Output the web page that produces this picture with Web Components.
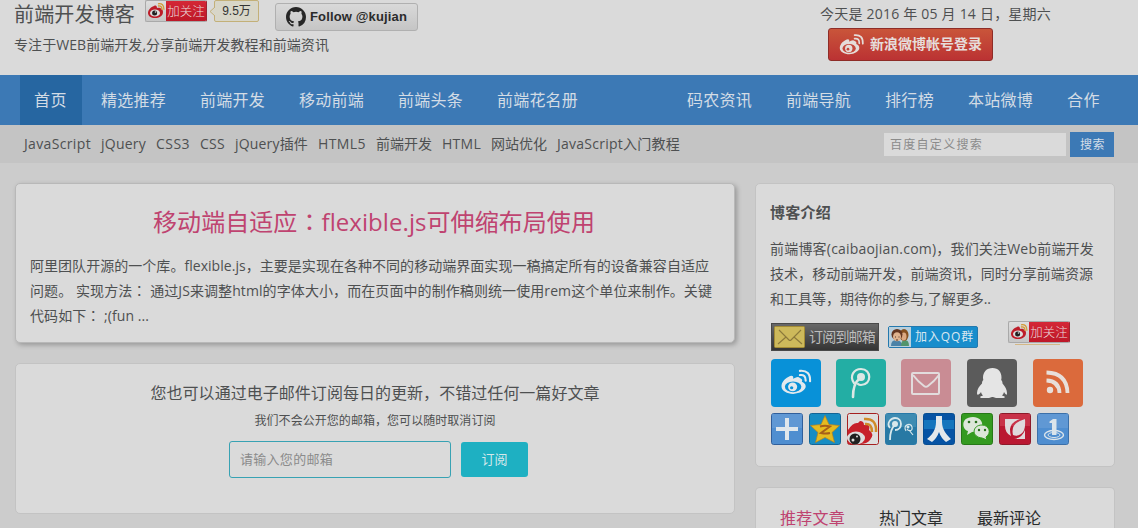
<!DOCTYPE html>
<html lang="zh-CN">
<head>
<meta charset="utf-8">
<title>前端开发博客</title>
<style>
html{overflow:hidden}
body{margin:0;width:1138px;height:528px;overflow:hidden;background:#ccc;color:#4e5051;font:14px/25px "Open Sans","Noto Sans CJK SC",sans-serif}
</style>
</head>
<body>
<blog-page></blog-page>
<script>
function component(name, html, ready) {
  const template = document.createElement('template');
  template.innerHTML = html;
  customElements.define(name, class extends HTMLElement {
    connectedCallback() {
      if (this.shadowRoot) return;
      this.attachShadow({ mode: 'open' }).append(template.content.cloneNode(true));
      if (ready) ready(this, this.shadowRoot);
    }
  });
}

component('blog-page', `
<style>
:host{display:block}
main{display:grid;grid-template-columns:720px 360px;column-gap:20px;padding:20px 0 0 15px;align-items:start}
.col{display:grid;row-gap:20px}
</style>
<site-header></site-header>
<site-nav></site-nav>
<topic-bar></topic-bar>
<main>
  <div class="col">
    <blog-card style="--h:160px;--shadow:2px 2px 5px rgba(0,0,0,.26);--line:#b8b8b8"><feature-post></feature-post></blog-card>
    <blog-card style="--h:151px"><mail-form></mail-form></blog-card>
  </div>
  <div class="col">
    <blog-card style="--h:284px"><blog-about></blog-about></blog-card>
    <blog-card style="--h:41px;--edge:0;--radius:5px 5px 0 0"><post-tabs></post-tabs></blog-card>
  </div>
</main>`);

component('blog-card', `
<style>:host{display:block;box-sizing:border-box;height:var(--h);background:#dadada;border:1px solid var(--line,#c3c3c3);border-bottom-width:var(--edge,1px);border-radius:var(--radius,5px);box-shadow:var(--shadow,none)}</style>
<slot></slot>`);

component('site-header', `
<style>
:host{display:flex;box-sizing:border-box;height:75px;background:#dadada;padding-left:14px}
.brand{width:806px}
.row{display:flex;height:32px;align-items:flex-start}
h1{margin:0;font-weight:400;font-size:20px;line-height:29px;width:131px}
p{margin:0;line-height:25px}
.github{margin:3px 0 0 16px}
.date{line-height:27px}
</style>
<div class="brand">
  <div class="row"><h1><fit-line width="121">前端开发博客</fit-line></h1><weibo-follow></weibo-follow><count-bubble>9.5万</count-bubble><github-follow class="github"></github-follow></div>
  <p><fit-line width="315">专注于WEB前端开发,分享前端开发教程和前端资讯</fit-line></p>
</div>
<div><div class="date"><fit-line width="231">今天是 2016 年 05 月 14 日，星期六</fit-line></div><weibo-login></weibo-login></div>`);

component('weibo-follow', `
<style>
:host{display:flex;box-sizing:border-box;width:62px;height:22px;border:1px solid #a9a9a9;border-right-color:#9d2430;border-radius:2px;overflow:hidden;background:linear-gradient(#dedede,#c6c6c6)}
svg{width:20px;height:20px;flex:none}
span{flex:1;background:linear-gradient(#d42736,#bd1828);color:#eadede;font:300 12.5px/19px "Noto Sans CJK SC",sans-serif;text-align:center;white-space:nowrap}
</style>
<svg viewBox="0 0 20 20"><path d="M8 5c2-1 3 0 3 2 4-1 6 2 6 4 0 4-4 6-8 6s-7-2-7-5 3-6 6-7z" fill="#bd1d29"/><ellipse cx="9" cy="12" rx="5" ry="3.6" fill="#ddd"/><circle cx="8.6" cy="12" r="2.5" fill="#202020"/><circle cx="9.5" cy="11" r=".8" fill="#ddd"/><path d="M12 5q4-1 4 4M12 2.8q6-1 6 6" fill="none" stroke="#d39a37" stroke-width="1.3"/></svg><span>加关注</span>`);

component('count-bubble', `
<style>
:host{display:flex;margin-left:2px;height:22px;width:50px;flex:none}
svg{width:6px;height:22px;flex:none;margin-right:-1px;z-index:1}
div{box-sizing:border-box;width:45px;border:1px solid #c3b078;border-radius:2px;background:#d8d6c8;color:#333;font:12px/20px "Liberation Sans","Noto Sans CJK SC",sans-serif;text-align:center}
</style>
<svg viewBox="0 0 6 22"><path d="M6 7L1 11.5 6 16" fill="#d8d6c8" stroke="#c3b078"/></svg><div><slot></slot></div>`);

component('github-follow', `
<style>
:host{display:flex;box-sizing:border-box;width:143px;height:28px;border:1px solid #b0b0b0;border-radius:3px;background:linear-gradient(#d9d9d9,#c5c5c5);padding-left:10px;align-items:center;color:#2b2b2b;font:bold 13px/26px "Liberation Sans",sans-serif}
svg{width:20px;height:20px;margin-right:4px}
</style>
<svg viewBox="0 0 16 16"><path fill="#262626" d="M8 0C3.58 0 0 3.58 0 8c0 3.54 2.29 6.53 5.47 7.59.4.07.55-.17.55-.38 0-.19-.01-.82-.01-1.49-2.01.37-2.53-.49-2.69-.94-.09-.23-.48-.94-.82-1.13-.28-.15-.68-.52-.01-.53.63-.01 1.08.58 1.23.82.72 1.21 1.87.87 2.33.66.07-.52.28-.87.51-1.07-1.78-.2-3.64-.89-3.64-3.95 0-.87.31-1.59.82-2.15-.08-.2-.36-1.02.08-2.12 0 0 .67-.21 2.2.82a7.4 7.4 0 0 1 4 0c1.53-1.04 2.2-.82 2.2-.82.44 1.1.16 1.92.08 2.12.51.56.82 1.27.82 2.15 0 3.07-1.87 3.75-3.65 3.95.29.25.54.73.54 1.48 0 1.07-.01 1.93-.01 2.2 0 .21.15.46.55.38A8 8 0 0 0 16 8c0-4.42-3.58-8-8-8z"/></svg><fit-line width="97">Follow @kujian</fit-line>`);

const weiboPath = `<path d="M20 10c-2-2-5 0-7 1 1-4-2-4-5-2C4 11 1 15 1 19c0 5 6 8 12 8 7 0 13-4 13-8 0-3-2-4-4-5 1-2 0-3-2-4z" fill="var(--ink,#e5dcd8)"/><ellipse cx="13" cy="19.500" rx="8.500" ry="5.700" fill="var(--hole,#c4463a)"/><circle cx="12.500" cy="19.500" r="4.700" fill="var(--ink,#e5dcd8)"/><circle cx="11.500" cy="20.500" r="1.700" fill="var(--hole,#c4463a)"/><path d="M20 7q6-1 6 6M20 2.500q11-1 10.500 11" fill="none" stroke="var(--ink,#e5dcd8)" stroke-width="2.200" stroke-linecap="round"/>`;

component('weibo-login', `
<style>
:host{display:flex;box-sizing:border-box;width:165px;height:33px;margin:1px 0 0 8px;border:1px solid #8e2c27;border-radius:3px;background:linear-gradient(#c9553a,#bb3233);align-items:center;padding-left:10px;color:#e6dddb;font-weight:700;line-height:30px}
svg{width:25px;height:23px;margin-right:6px}
fit-line{margin-top:-2px}
</style>
<svg viewBox="0 0 32 29">${weiboPath}</svg><fit-line width="112">新浪微博帐号登录</fit-line>`);

component('site-nav', `
<style>
:host{display:flex;justify-content:space-between;box-sizing:border-box;height:50px;background:#3c79b5;padding:0 23px 0 20px}
nav{display:flex;gap:5px}
a{box-sizing:border-box;padding:0 15px 0 14px;font-size:16px;line-height:50px;color:#d3dce5;white-space:nowrap}
a.on{background:#2666a1}
</style>
<nav><a class="on"><fit-line width="33">首页</fit-line></a><a><fit-line width="65">精选推荐</fit-line></a><a><fit-line width="65">前端开发</fit-line></a><a><fit-line width="65">移动前端</fit-line></a><a><fit-line width="65">前端头条</fit-line></a><a><fit-line width="81">前端花名册</fit-line></a></nav>
<nav><a><fit-line width="65">码农资讯</fit-line></a><a><fit-line width="65">前端导航</fit-line></a><a><fit-line width="49">排行榜</fit-line></a><a><fit-line width="65">本站微博</fit-line></a><a><fit-line width="33">合作</fit-line></a></nav>`);

component('topic-bar', `
<style>
:host{display:flex;box-sizing:border-box;height:38px;background:#c4c4c4;padding:0 24px 0 24px;justify-content:space-between;align-items:center}
nav{display:flex;gap:10px;line-height:37px;margin-top:-2px}
form{display:flex;align-items:center;margin-bottom:-1px}
.field{box-sizing:border-box;width:182px;height:23px;background:#dadada;color:#8b8b8b;padding-left:6px;font-size:12px;line-height:23px;margin:0 4px 0 0}
.go{box-sizing:border-box;width:44px;height:25px;padding-left:1px;background:#3c79b5;color:#d5dee8;font-size:12px;line-height:25px;text-align:center;letter-spacing:.5px}
</style>
<nav><fit-line width="67">JavaScript</fit-line><fit-line width="45">jQuery</fit-line><fit-line width="34">CSS3</fit-line><fit-line width="25">CSS</fit-line><fit-line width="73">jQuery插件</fit-line><fit-line width="48">HTML5</fit-line><fit-line width="56">前端开发</fit-line><fit-line width="39">HTML</fit-line><fit-line width="56">网站优化</fit-line><fit-line width="123">JavaScript入门教程</fit-line></nav>
<form><div class="field"><fit-line width="93">百度自定义搜索</fit-line></div><div class="go">搜索</div></form>`);

component('feature-post', `
<style>
:host{display:block;padding:19px 14px 0}
h2{margin:0 0 13px 123px;font-size:24px;font-weight:400;line-height:36px;color:#bf4370}
p{margin:0;display:flex;flex-direction:column}
[lang=ja]{font-family:"Noto Sans CJK JP",sans-serif}
</style>
<h2><fit-line width="442">移动端自适应<span lang="ja">：</span>flexible.js可伸缩布局使用</fit-line></h2>
<p><fit-line width="679">阿里团队开源的一个库。flexible.js，主要是实现在各种不同的移动端界面实现一稿搞定所有的设备兼容自适应</fit-line><fit-line width="682">问题。 实现方法<span lang="ja">：</span> 通过JS来调整html的字体大小，而在页面中的制作稿则统一使用rem这个单位来制作。关键</fit-line><fit-line width="119">代码如下<span lang="ja">：</span> ;(fun ...</fit-line></p>`);

component('mail-form', `
<style>
:host{display:flex;flex-direction:column;align-items:center;padding-top:16px}
h3{margin:0;font-size:16px;font-weight:400;line-height:27px}
p{margin:1px 0 0;font-size:12px;line-height:26px}
form{display:flex;gap:10px;margin:7px 0 0 7px;align-items:center}
.field{box-sizing:border-box;width:222px;height:37px;border:1px solid #38a2b3;border-radius:3px;padding-left:10px;color:#8b8b8b;font-size:13px;line-height:35px}
.go{width:67px;height:35px;border-radius:3px;background:#1eb0c2;color:#d6e8eb;font-size:13px;line-height:34px;text-align:center}
</style>
<h3><fit-line width="449">您也可以通过电子邮件订阅每日的更新，不错过任何一篇好文章</fit-line></h3>
<p><fit-line width="241">我们不会公开您的邮箱，您可以随时取消订阅</fit-line></p>
<form><div class="field"><fit-line width="93">请输入您的邮箱</fit-line></div><div class="go">订阅</div></form>`);

component('blog-about', `
<style>
:host{display:block;padding:16px 0 0 14px}
h3{margin:0 0 11px;font-size:15px;font-weight:700;line-height:25px}
p{margin:0;display:flex;flex-direction:column}
.badges{display:flex;align-items:flex-start;height:48px;box-sizing:border-box;padding:10px 0 0 1px}
.mail{display:flex;box-sizing:border-box;width:108px;height:28px;margin-top:2px;background:linear-gradient(#686868,#343434);border:1px solid #494949;align-items:center;padding-left:2px;color:#bdbdbd;line-height:26px}
.mail svg{width:31px;height:22px;margin-right:4px}
.qq{display:flex;box-sizing:border-box;width:90px;height:22px;margin:5px 30px 0 9px;border:1px solid #2479ae;border-radius:2px;background:#188dcc;color:#d8e7f0;font-size:12px;line-height:20px}
.qq svg{width:22px;height:20px;margin-right:4px;flex:none}
.follow i{display:block;width:45px;height:1px;margin:1px 0 0 7px;background:#d4b886}
.big{display:grid;grid-template-columns:65px 65px 66px 66px 50px;padding-left:1px}
.small{display:grid;grid-template-columns:repeat(8,38px);padding:6px 0 0 1px}
.big>svg{width:50px;height:48px;border-radius:4px}
.small>svg{width:32px;height:32px;border-radius:2px}
</style>
<h3><fit-line width="61">博客介绍</fit-line></h3>
<p><fit-line width="324">前端博客(caibaojian.com)，我们关注Web前端开发</fit-line><fit-line width="323">技术，移动前端开发，前端资讯，同时分享前端资源</fit-line><fit-line width="221">和工具等，期待你的参与,了解更多..</fit-line></p>
<div class="badges">
  <div class="mail"><svg viewBox="0 0 31 22"><rect x=".5" y=".5" width="30" height="21" rx="1" fill="#cdb95b" stroke="#a48c35"/><path d="M5 4l10 10q1 1 2 0L27 4M4 18l8-7M28 18l-8-7" fill="none" stroke="#8b783b" stroke-width="1.1"/></svg><fit-line width="66">订阅到邮箱</fit-line></div>
  <div class="qq"><svg viewBox="0 0 22 20"><rect width="22" height="20" fill="#b9cfdc"/><path d="M2 19q0-6 5-6t7 6z" fill="#4b82a7"/><path d="M12 19q0-6 4-6t4 6z" fill="#51946c"/><ellipse cx="15" cy="8" rx="4.500" ry="6" fill="#86501f"/><ellipse cx="14.800" cy="9.500" rx="2.700" ry="4" fill="#dba982"/><circle cx="8" cy="7.500" r="5.500" fill="#633620"/><ellipse cx="8" cy="9.800" rx="4" ry="4.500" fill="#dfb38e"/><path d="M6 10h1M9.500 10h1M7 13h2" stroke="#523429"/></svg><fit-line width="59">加入QQ群</fit-line></div>
  <div class="follow"><weibo-follow></weibo-follow><i></i></div>
</div>
<div class="big">
  <svg viewBox="0 0 50 48" style="--ink:#e2e9ed;--hole:#0891d8"><rect width="50" height="48" fill="#0891d8"/><g transform="translate(9.500 9.500) scale(.97 .94)">${weiboPath}</g></svg>
  <svg viewBox="0 0 50 48"><rect width="50" height="48" fill="#23aea4"/><g fill="none" stroke="#dce8e5" stroke-linecap="round"><path d="M18 24C13 17 18 10 25 10c11 0 11 16 0 16q-2 0-3-1" stroke-width="2.200"/><path d="M23 20q-6 5-6 18" stroke-width="2.600"/></g><circle cx="25" cy="18" r="4" fill="#dce8e5"/></svg>
  <svg viewBox="0 0 50 48"><rect width="50" height="48" fill="#c98c94"/><rect x="11" y="14" width="27" height="21" rx="1" fill="none" stroke="#e2dcdd" stroke-width="2"/><path d="M12 16c3 4 7 8 11 11q2 1.500 4 0c4-3 8-7 11-11" fill="none" stroke="#e2dcdd" stroke-width="2"/></svg>
  <svg viewBox="0 0 50 48"><rect width="50" height="48" fill="#5b5b5b"/><path d="M25.500 9c-6 0-9.500 4-9.500 10l.3 2c-1 1-1.300 2-1.300 3.500-3 3-5 6-5 9.500 0 3 2 2 4-1 .3 1.500 1 2.500 2 3.500-4 1-3.500 2.500-.5 2.500H22l3-1h1l3 1h6.500c3 0 3.500-1.500-.5-2.500 1-1 1.700-2 2-3.500 2 3 3 4 3 1 0-3.500-2-6.500-4.500-9.500 0-1.500-.3-2.500-1.300-3.500l.3-2c0-6-3-10-9-10z" fill="#e5e5e5"/></svg>
  <svg viewBox="0 0 50 48"><rect width="50" height="48" fill="#db6a3c"/><circle cx="17" cy="31" r="3.200" fill="#e8dfda"/><path d="M13.500 21.500Q26 22 26.500 34M13.500 13.500Q34 14 34.500 34" stroke="#e8dfda" stroke-width="3.800" fill="none"/></svg>
</div>
<div class="small">
  <svg viewBox="0 0 32 32"><rect x=".5" y=".5" width="31" height="31" rx="2" fill="#4f8ed0" stroke="#315f9b"/><path d="M1 1h30v14H1z" fill="#6c9fd7" opacity=".6"/><path d="M14 5h4v9h9v4h-9v9h-4v-9H5v-4h9z" fill="#e0e7ec"/></svg>
  <svg viewBox="0 0 32 32"><rect x=".5" y=".5" width="31" height="31" rx="2" fill="#178dc3" stroke="#136596"/><path d="M16 2.500l4 9 10.500 1-7.500 7 2.500 10L16 24.500 6.500 29.500 9 19.500l-7.500-7 10.500-1z" fill="#e5bb20" stroke="#b48321" stroke-width=".7"/><path d="M11 13.500q5-1.500 10 0l-9 6.500q5 1 9 0" fill="none" stroke="#a75f19" stroke-width="2"/></svg>
  <svg viewBox="0 0 32 32"><rect x=".5" y=".5" width="31" height="31" rx="2" fill="#dedede" stroke="#a52020"/><path d="M1 17q5-8 10-7l2-2q4 0 4 4 7-1 5 5 6 4 1 10-3 4-10 4H1z" fill="#c7202a"/><ellipse cx="9" cy="25" rx="9" ry="6.500" fill="#ddd"/><circle cx="8" cy="26" r="5.500" fill="#202020"/><circle cx="6" cy="27" r="1.500" fill="#ddd"/><circle cx="10" cy="23.500" r="1" fill="#ddd"/><path d="M18 11q7-1 7 8M17 6q13-1 12 13" fill="none" stroke="#cf8b28" stroke-width="2.500"/></svg>
  <svg viewBox="0 0 32 32"><rect x=".5" y=".5" width="31" height="31" rx="2" fill="#2879a4" stroke="#2879a8"/><path d="M1 1h30v13H1z" fill="#4b98bd" opacity=".6"/><g fill="none" stroke="#d8e8ec" stroke-width="1.800"><path d="M5 15C1 10 6 5 10 5c8 0 8 12 0 12M10 12q-5 4-5 15"/><path d="M21 18c-4-6 5-9 6-4s-4 4-5 2M24 17l4 5" stroke-width="1.200"/></g><circle cx="10" cy="11" r="3" fill="#d8e8ec"/><circle cx="23" cy="14" r="1.500" fill="#d8e8ec"/></svg>
  <svg viewBox="0 0 32 32"><rect x=".5" y=".5" width="31" height="31" rx="2" fill="#0653a4" stroke="#084e91"/><path d="M1 7h30v9H1z" fill="#1475bd"/><path d="M13 3h6v6c0 8 5 13 9 17l-5 3q-5-4-7-10-2 6-7 10l-5-3c5-4 9-9 9-17z" fill="#e2e8ec"/></svg>
  <svg viewBox="0 0 32 32"><rect x=".5" y=".5" width="31" height="31" rx="2" fill="#349a20" stroke="#267817"/><path d="M12 4C-1 4 1 17 7 18l-1 4 5-3c14 0 13-15 1-15z" fill="#dce7d9"/><path d="M21 12c-10 0-11 12 0 13l5 2-1-3c6-4 3-12-4-12z" fill="#dce7d9" stroke="#349a20"/><g fill="#266d1b"><circle cx="8" cy="9" r="1.300"/><circle cx="15" cy="9" r="1.300"/><circle cx="18" cy="17" r="1.200"/><circle cx="24" cy="17" r="1.200"/></g></svg>
  <svg viewBox="0 0 32 32"><rect x=".5" y=".5" width="31" height="31" rx="2" fill="#ba1832" stroke="#8d1a2a"/><path d="M1 1h30v12H1z" fill="#d74c60" opacity=".5"/><path d="M6 6h15q-9 3-10 10 0 4 1 7-6-3-6-10z" fill="#dfd9dc"/><path d="M26 6q1 12-4 15-4 3-8 1-3-12 12-16z" fill="#dfd9dc"/><path d="M26 17v9H15q8-1 11-9z" fill="#dfd9dc"/></svg>
  <svg viewBox="0 0 32 32"><rect x=".5" y=".5" width="31" height="31" rx="2" fill="#4f8ed0" stroke="#3c70a9"/><path d="M1 1h30v14H1z" fill="#6c9fd7" opacity=".6"/><ellipse cx="17" cy="22" rx="9.500" ry="4.500" fill="none" stroke="#dae4eb" stroke-width="1.400"/><ellipse cx="17" cy="22" rx="6" ry="2.500" fill="none" stroke="#dae4eb"/><path d="M12.500 8.500L16 6h3.500v16H15V10h-2.500z" fill="#dae4eb"/></svg>
</div>`);

component('post-tabs', `
<style>
:host{display:flex;padding:17px 0 0 24px;gap:34px;font-size:16px;line-height:22px;color:#292b2c}
div{padding-top:2px}
.on{color:#bf4370}
</style>
<div class="on"><fit-line width="65">推荐文章</fit-line></div><div><fit-line width="64">热门文章</fit-line></div><div><fit-line width="64">最新评论</fit-line></div>`);

/* A single line of text whose tracking is set so that it fills the given width. */
component('fit-line', `
<style>:host{display:inline-block;white-space:nowrap;vertical-align:top}:host([fitted]){width:var(--w)}</style><span><slot></slot></span>`,
(host, root) => {
  const width = Number(host.getAttribute('width'));
  const natural = root.querySelector('span').getBoundingClientRect().width;
  host.style.letterSpacing = (width - natural) / [...host.textContent].length + 'px';
  host.style.setProperty('--w', width + 'px');
  host.setAttribute('fitted', '');
});
</script>
</body>
</html>
